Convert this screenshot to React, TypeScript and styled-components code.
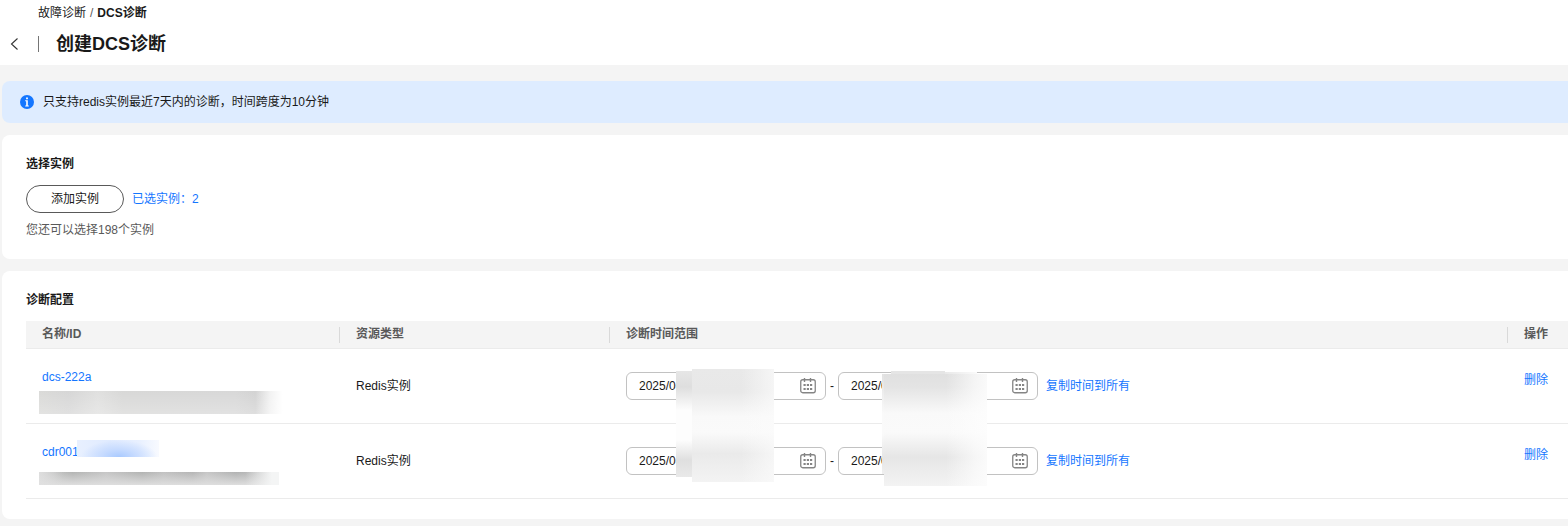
import React from "react";
import styled, { createGlobalStyle } from "styled-components";

const GlobalStyle = createGlobalStyle`
  * { box-sizing: border-box; }
  body {
    margin: 0;
    background: #f4f4f4;
    color: #191919;
    font-family: "Liberation Sans", "Noto Sans CJK SC", sans-serif;
    font-size: 12px;
    line-height: 18px;
  }
  button, input { font: inherit; }
`;

const Header = styled.header`
  background: #fff;
  padding: 4px 0 9px;
`;

const Breadcrumb = styled.nav`
  display: flex;
  gap: 4px;
  padding-left: 38px;
`;

const CrumbLink = styled.a`
  color: #191919;
  text-decoration: none;
`;

const Slash = styled.span`
  color: #595959;
`;

const CurrentCrumb = styled.span`
  font-weight: 700;
`;

const TitleRow = styled.div`
  display: flex;
  align-items: center;
  margin-top: 10px;
  padding-left: 8px;
`;

const BackButton = styled.button`
  display: flex;
  padding: 0;
  border: 0;
  background: none;
  color: #333;
  cursor: pointer;
`;

const TitleDivider = styled.span`
  width: 1px;
  height: 16px;
  margin: 0 17px 0 16px;
  background: #757575;
`;

const Title = styled.h1`
  margin: 0;
  font-size: 18px;
  line-height: 24px;
`;

const Content = styled.main`
  display: flex;
  flex-direction: column;
  gap: 12px;
  padding: 16px 0 7px 2px;
`;

const Notice = styled.div`
  display: flex;
  align-items: center;
  gap: 9px;
  padding: 12px 18px;
  border-radius: 8px 0 0 8px;
  background: #deecff;
`;

const Card = styled.section`
  padding: 20px 0 20px 24px;
  border-radius: 8px 0 0 8px;
  background: #fff;
`;

const CardTitle = styled.h2`
  margin: 0 0 12px;
  font-size: 12px;
  line-height: 18px;
`;

const SelectRow = styled.div`
  display: flex;
  align-items: center;
  gap: 8px;
`;

const PillButton = styled.button`
  height: 28px;
  padding: 0 24px;
  border: 1px solid #595959;
  border-radius: 14px;
  background: #fff;
  color: #191919;
  cursor: pointer;
`;

const Selected = styled.span`
  color: #1476ff;
`;

const Hint = styled.p`
  margin: 8px 0 0;
  color: #595959;
`;

const TableWrap = styled.div`
  position: relative;
`;

const Table = styled.table`
  width: 100%;
  table-layout: fixed;
  border-spacing: 0;
`;

const Th = styled.th<{ $width?: number }>`
  position: relative;
  width: ${(p) => (p.$width ? `${p.$width}px` : "auto")};
  height: 28px;
  padding: 0 0 2px 16px;
  border-bottom: 1px solid #ebebeb;
  background: #f4f4f4;
  color: #595959;
  font-weight: 700;
  text-align: left;

  &:not(:last-child)::after {
    content: "";
    position: absolute;
    top: 6px;
    right: 0;
    width: 1px;
    height: 16px;
    background: #d9d9d9;
  }
`;

const Td = styled.td<{ $top?: boolean }>`
  height: 75px;
  padding: ${(p) => (p.$top ? "22px" : "0")} 0 0 16px;
  border-bottom: 1px solid #ebebeb;
  vertical-align: ${(p) => (p.$top ? "top" : "middle")};
`;

const NameTd = styled(Td)`
  padding-top: 19px;
  vertical-align: top;
`;

const ResourceLink = styled.a`
  display: block;
  color: #1476ff;
  text-decoration: none;
`;

const TextButton = styled.button`
  padding: 0;
  border: 0;
  background: none;
  color: #1476ff;
  cursor: pointer;
`;

const Range = styled.div`
  display: flex;
  align-items: center;
  gap: 4px;

  ${TextButton} {
    margin-left: 4px;
  }
`;

const DateField = styled.label`
  display: flex;
  align-items: center;
  width: 200px;
  height: 28px;
  padding: 0 9px 0 12px;
  border: 1px solid #c2c2c2;
  border-radius: 6px;
  background: #fff;
`;

const DateInput = styled.input`
  flex: 1;
  min-width: 0;
  padding: 0;
  border: 0;
  outline: 0;
  background: none;
  color: #191919;
`;

const Mask = styled.div<{ $x: number; $y: number; $w: number; $h: number; $fill: string }>`
  position: absolute;
  left: ${(p) => p.$x}px;
  top: ${(p) => p.$y}px;
  width: ${(p) => p.$w}px;
  height: ${(p) => p.$h}px;
  background: ${(p) => p.$fill};
`;

const InfoIcon = () => (
  <svg width="14" height="14" viewBox="0 0 14 14" aria-hidden="true">
    <circle cx="7" cy="7" r="7" fill="#1476ff" />
    <path d="M6.1 2.5h1.8v1.7H6.1zM5.2 5.2h2.6v5.2h1v1H5.2v-1h1V6.2h-1z" fill="#fff" />
  </svg>
);

const BackIcon = () => (
  <svg width="14" height="14" viewBox="0 0 14 14" fill="none" stroke="currentColor" strokeWidth="1.1" aria-hidden="true">
    <path d="M9.5 1.5 3.5 7l6 5.5" />
  </svg>
);

const CalendarIcon = () => (
  <svg width="16" height="16" viewBox="0 0 16 16" fill="none" stroke="#858585" aria-hidden="true">
    <rect x="0.75" y="1.75" width="14.5" height="13" rx="2" strokeWidth="1.3" />
    <path d="M4.5 0v4M10.5 0v4" strokeWidth="1.4" />
    <path d="M3.5 7h2.2M6.8 7H9M10 7h2.2M3.5 11h2.2M6.8 11H9M10 11h2.2" strokeWidth="1.8" />
  </svg>
);

const DateBox = ({ label }: { label: string }) => (
  <DateField>
    <DateInput defaultValue="2025/0" aria-label={label} />
    <CalendarIcon />
  </DateField>
);

const masks = [
  { x: 13, y: 70, w: 246, h: 23, fill: "linear-gradient(90deg, #fff0 88%, #ffffffb0 94%, #fff 99%), linear-gradient(#fff0, #ffffff40), linear-gradient(90deg, #dadad8, #d6d6d6 12%, #e0e0df 24%, #d8d8d7 34%, #d8d8d8 80%, #d3d3d3 88%, #d8d8d8)" },
  { x: 51, y: 119, w: 82, h: 17, fill: "radial-gradient(ellipse 38px 17px at 42px 100%, #a9caff, #bdd5ffc0 45%, #e4eeff00), linear-gradient(90deg, #e8f0ff, #e0ebff 40%, #e8f0ff 75%, #f8faff)" },
  { x: 13, y: 151, w: 240, h: 13, fill: "linear-gradient(90deg, #e2e2e2b0, #fff0 10%, #fff0 86%, #f4f5f5 97%), linear-gradient(#fff0, #dedede), linear-gradient(90deg, #d3d3d3, #b3b4b3 14%, #c6c6c6 28%, #b2b3b2 43%, #c1c1c1 52%, #b5b5b5 64%, #c6c6c6 70%, #b1b2b2 82%, #c8c8c8)" },
  { x: 650, y: 50, w: 16, h: 106, fill: "linear-gradient(#e6e6e6, #dedede 15%, #fdfdfd 37%, #fdfdfd 65%, #dfdfdf 84%, #e9e9e9)" },
  { x: 666, y: 48, w: 82, h: 113, fill: "linear-gradient(90deg, #fff0 60%, #fbfbfbb0), linear-gradient(#e9e9e9, #e8e8e8 20%, #f9f9f9 42%, #fafafa 56%, #eaeaea 75%, #f3f3f3)" },
  { x: 865, y: 50, w: 54, h: 3, fill: "#e5e5e5" },
  { x: 919, y: 51, w: 32, h: 2, fill: "linear-gradient(90deg, #e9e9e9, #fafafa)" },
  { x: 856, y: 53, w: 2, h: 100, fill: "linear-gradient(#e2e2e2, #fafafa 40%, #fafafa 60%, #e5e5e5 85%, #f0f0f0)" },
  { x: 858, y: 53, w: 103, h: 112, fill: "linear-gradient(90deg, #fff0 60%, #fdfdfdb0 88%, #fdfdfde0), linear-gradient(#e0e0e0, #e4e4e4 12%, #f9f9f9 35%, #fafafa 52%, #e6e6e6 74%, #f3f3f3)" },
];

const rows = ["dcs-222a", "cdr001"];

export default function App() {
  return (
    <>
      <GlobalStyle />
      <Header>
        <Breadcrumb aria-label="breadcrumb">
          <CrumbLink href="#">故障诊断</CrumbLink>
          <Slash>/</Slash>
          <CurrentCrumb>DCS诊断</CurrentCrumb>
        </Breadcrumb>
        <TitleRow>
          <BackButton aria-label="返回">
            <BackIcon />
          </BackButton>
          <TitleDivider />
          <Title>创建DCS诊断</Title>
        </TitleRow>
      </Header>
      <Content>
        <Notice>
          <InfoIcon />
          <span>只支持redis实例最近7天内的诊断，时间跨度为10分钟</span>
        </Notice>
        <Card>
          <CardTitle>选择实例</CardTitle>
          <SelectRow>
            <PillButton>添加实例</PillButton>
            <Selected>已选实例：2</Selected>
          </SelectRow>
          <Hint>您还可以选择198个实例</Hint>
        </Card>
        <Card>
          <CardTitle>诊断配置</CardTitle>
          <TableWrap>
            <Table>
              <thead>
                <tr>
                  <Th $width={314}>名称/ID</Th>
                  <Th $width={270}>资源类型</Th>
                  <Th>诊断时间范围</Th>
                  <Th $width={60}>操作</Th>
                </tr>
              </thead>
              <tbody>
                {rows.map((name) => (
                  <tr key={name}>
                    <NameTd>
                      <ResourceLink href="#">{name}</ResourceLink>
                    </NameTd>
                    <Td>Redis实例</Td>
                    <Td>
                      <Range>
                        <DateBox label="开始时间" />
                        <span>-</span>
                        <DateBox label="结束时间" />
                        <TextButton>复制时间到所有</TextButton>
                      </Range>
                    </Td>
                    <Td $top>
                      <TextButton>删除</TextButton>
                    </Td>
                  </tr>
                ))}
              </tbody>
            </Table>
            {masks.map((m) => (
              <Mask key={`${m.x}-${m.y}`} $x={m.x} $y={m.y} $w={m.w} $h={m.h} $fill={m.fill} />
            ))}
          </TableWrap>
        </Card>
      </Content>
    </>
  );
}
